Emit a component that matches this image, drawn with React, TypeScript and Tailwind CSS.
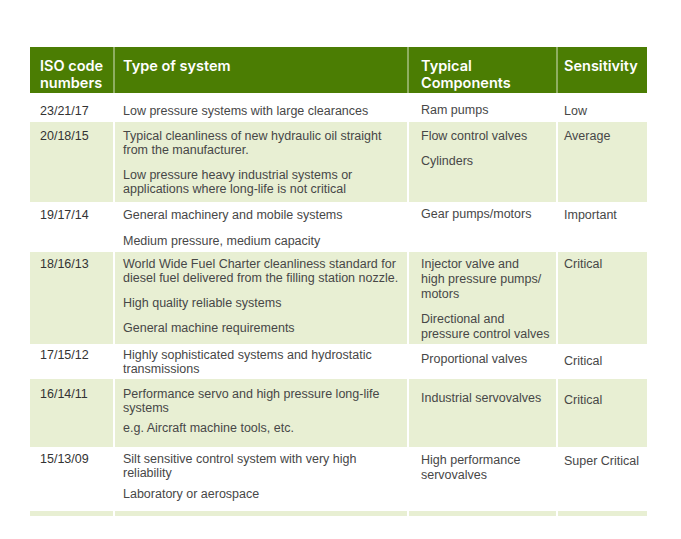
interface Row {
  iso: string
  system: string[]
  comps: string[][]
  sensitivity: string
  shaded: boolean
  height: string
  pad: string
  compPad: string
  sensPad: string
  gap: string
}

const rows: Row[] = [
  {
    iso: "23/21/17",
    system: ["Low pressure systems with large clearances"],
    comps: [["Ram pumps"]],
    sensitivity: "Low",
    shaded: false,
    height: "h-[29px]",
    pad: "pt-[11px]",
    compPad: "pt-[10px]",
    sensPad: "pt-[11px]",
    gap: "gap-[11px]",
  },
  {
    iso: "20/18/15",
    system: [
      "Typical cleanliness of new hydraulic oil straight from the manufacturer.",
      "Low pressure heavy industrial systems or applications where long-life is not critical",
    ],
    comps: [["Flow control valves"], ["Cylinders"]],
    sensitivity: "Average",
    shaded: true,
    height: "h-[80px]",
    pad: "pt-[7px]",
    compPad: "pt-[7px]",
    sensPad: "pt-[7px]",
    gap: "gap-[11px]",
  },
  {
    iso: "19/17/14",
    system: ["General machinery and mobile systems", "Medium pressure, medium capacity"],
    comps: [["Gear pumps/motors"]],
    sensitivity: "Important",
    shaded: false,
    height: "h-[50px]",
    pad: "pt-[6px]",
    compPad: "pt-[5px]",
    sensPad: "pt-[6px]",
    gap: "gap-[12px]",
  },
  {
    iso: "18/16/13",
    system: [
      "World Wide Fuel Charter cleanliness standard for diesel fuel delivered from the filling station nozzle.",
      "High quality reliable systems",
      "General machine requirements",
    ],
    comps: [
      ["Injector valve and", "high pressure pumps/", "motors"],
      ["Directional and", "pressure control valves"],
    ],
    sensitivity: "Critical",
    shaded: true,
    height: "h-[92px]",
    pad: "pt-[5px]",
    compPad: "pt-[5px]",
    sensPad: "pt-[5px]",
    gap: "gap-[11px]",
  },
  {
    iso: "17/15/12",
    system: ["Highly sophisticated systems and hydrostatic transmissions"],
    comps: [["Proportional valves"]],
    sensitivity: "Critical",
    shaded: false,
    height: "h-[35px]",
    pad: "pt-[4px]",
    compPad: "pt-[8px]",
    sensPad: "pt-[10px]",
    gap: "gap-[11px]",
  },
  {
    iso: "16/14/11",
    system: ["Performance servo and high pressure long-life systems", "e.g. Aircraft machine tools, etc."],
    comps: [["Industrial servovalves"]],
    sensitivity: "Critical",
    shaded: true,
    height: "h-[68px]",
    pad: "pt-[8px]",
    compPad: "pt-[12px]",
    sensPad: "pt-[14px]",
    gap: "gap-[6px]",
  },
  {
    iso: "15/13/09",
    system: ["Silt sensitive control system with very high reliability", "Laboratory or aerospace"],
    comps: [["High performance", "servovalves"]],
    sensitivity: "Super Critical",
    shaded: false,
    height: "h-[64px]",
    pad: "pt-[5px]",
    compPad: "pt-[6px]",
    sensPad: "pt-[7px]",
    gap: "gap-[7px]",
  },
]

const cols = "grid grid-cols-[83px_292px_147px_89px] gap-x-[2px]"

function Header() {
  return (
    <div className={`${cols} bg-[#8fae62] h-[46px] font-['Inter',sans-serif] text-[14.5px] font-semibold leading-[17px] text-white`}>
      <div className="bg-[#4b7d03] pl-[10px] pt-[10px]">
        ISO code
        <br />
        numbers
      </div>
      <div className="bg-[#4b7d03] pl-[8px] pt-[10px]">Type of system</div>
      <div className="bg-[#4b7d03] pl-[12px] pt-[10px]">
        Typical
        <br />
        Components
      </div>
      <div className="bg-[#4b7d03] pl-[6px] pt-[10px]">Sensitivity</div>
    </div>
  )
}

function TableRow({ row }: { row: Row }) {
  const bg = row.shaded ? "bg-[#e8efd3]" : "bg-white"
  return (
    <div className={`${cols} ${row.height}`}>
      <div className={`${bg} pl-[10px] ${row.pad} text-[#333] leading-[14px]`}>{row.iso}</div>
      <div className={`${bg} pl-[8px] pr-2 ${row.pad} flex flex-col ${row.gap} leading-[14px]`}>
        {row.system.map((p) => (
          <p key={p}>{p}</p>
        ))}
      </div>
      <div className={`${bg} pl-[12px] ${row.compPad} flex flex-col gap-[10px] leading-[15px]`}>
        {row.comps.map((lines) => (
          <p key={lines[0]} className="whitespace-nowrap">
            {lines.map((line, i) => (
              <span key={line}>
                {i > 0 && <br />}
                {line}
              </span>
            ))}
          </p>
        ))}
      </div>
      <div className={`${bg} pl-[6px] ${row.sensPad} leading-[14px] whitespace-nowrap`}>{row.sensitivity}</div>
    </div>
  )
}

export default function App() {
  return (
    <div className="min-h-[539px] bg-white pt-[47px] pl-[30px]">
      <div className="w-[617px] font-['Liberation_Sans',Arial,sans-serif] text-[12.5px] text-[#474747]">
        <Header />
        {rows.map((row) => (
          <TableRow key={row.iso} row={row} />
        ))}
        <div className={`${cols} h-[5px]`}>
          <div className="bg-[#e8efd3]" />
          <div className="bg-[#e8efd3]" />
          <div className="bg-[#e8efd3]" />
          <div className="bg-[#e8efd3]" />
        </div>
      </div>
    </div>
  )
}
